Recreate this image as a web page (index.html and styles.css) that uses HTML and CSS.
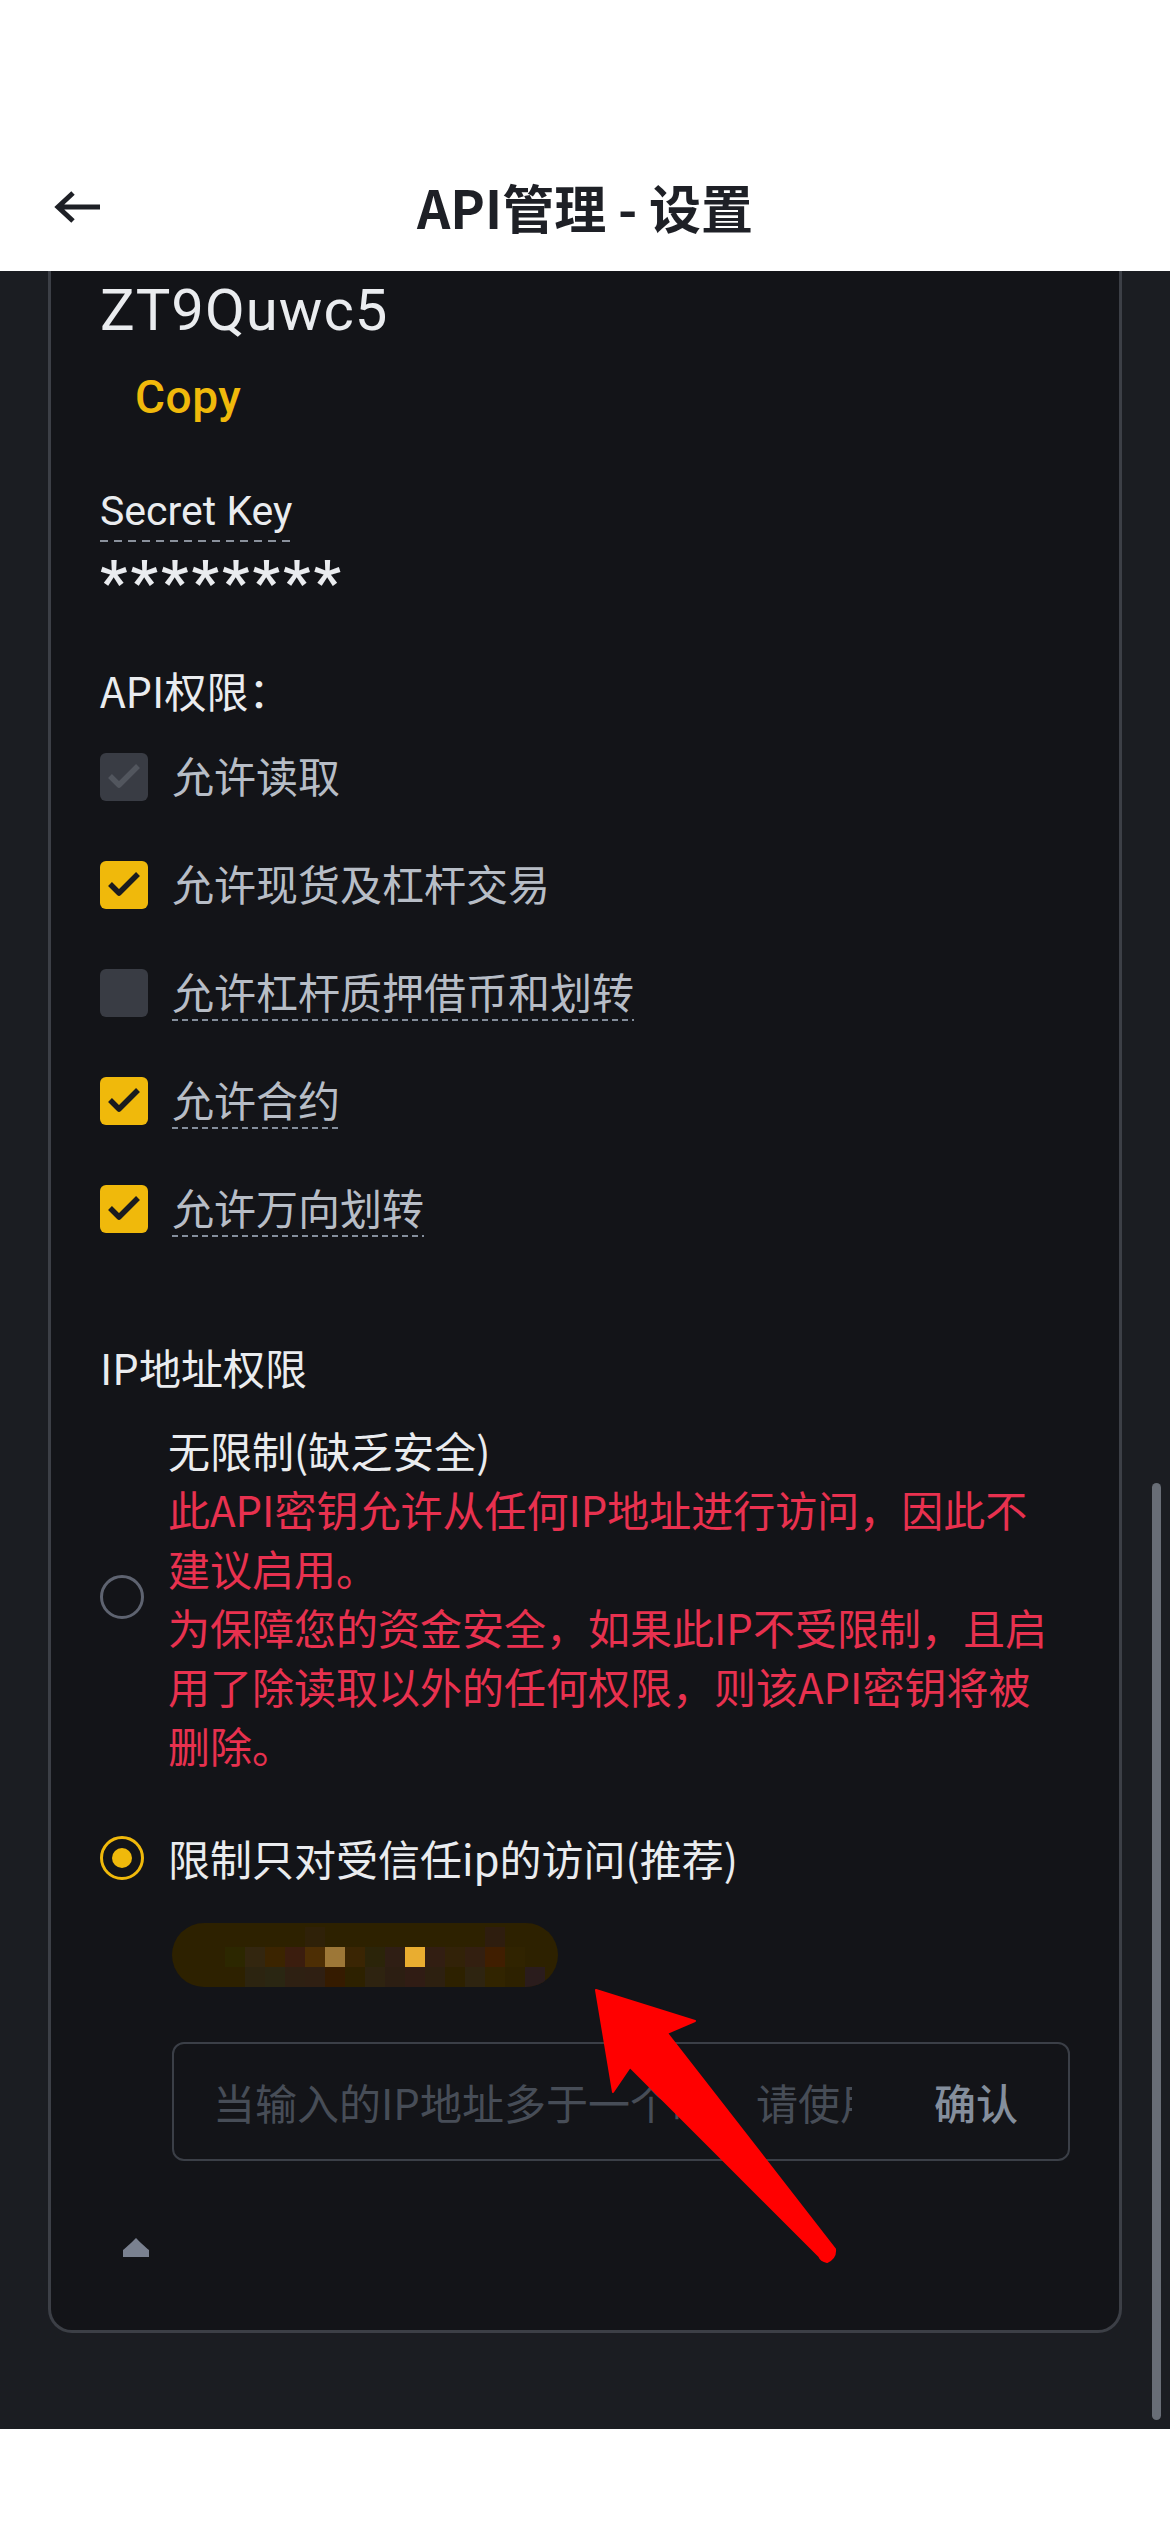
FILE: index.html
```html
<!DOCTYPE html>
<html lang="zh-CN">
<head>
<meta charset="utf-8">
<title>API管理 - 设置</title>
<link rel="stylesheet" href="styles.css">
</head>
<body>
<header class="topbar">
  <div class="navbar">
    <button class="back" aria-label="返回">
      <svg viewBox="0 0 50 38" width="50" height="38"><path d="M19 5 L4 19 L19 33 M4 19 H46" fill="none" stroke="#1e2026" stroke-width="5"/></svg>
    </button>
    <h1 class="title">API管理 - 设置</h1>
  </div>
</header>

<main class="screen">
  <section class="card">
    <div class="apikey">ZT9Quwc5</div>
    <div class="copy">Copy</div>
    <div class="field-label"><span class="dotted">Secret Key</span></div>
    <div class="secret">********</div>

    <div class="section-title">API权限：</div>
    <ul class="perms">
      <li class="perm">
        <span class="cb disabled"><svg viewBox="0 0 48 48" width="48" height="48"><path d="M10 23 L19 32 L38 13" fill="none" stroke-width="5.5" stroke-linejoin="round"/></svg></span>
        <span class="perm-label">允许读取</span>
      </li>
      <li class="perm">
        <span class="cb checked"><svg viewBox="0 0 48 48" width="48" height="48"><path d="M10 23 L19 32 L38 13" fill="none" stroke-width="5.5" stroke-linejoin="round"/></svg></span>
        <span class="perm-label">允许现货及杠杆交易</span>
      </li>
      <li class="perm">
        <span class="cb"></span>
        <span class="perm-label tip">允许杠杆质押借币和划转</span>
      </li>
      <li class="perm">
        <span class="cb checked"><svg viewBox="0 0 48 48" width="48" height="48"><path d="M10 23 L19 32 L38 13" fill="none" stroke-width="5.5" stroke-linejoin="round"/></svg></span>
        <span class="perm-label tip">允许合约</span>
      </li>
      <li class="perm">
        <span class="cb checked"><svg viewBox="0 0 48 48" width="48" height="48"><path d="M10 23 L19 32 L38 13" fill="none" stroke-width="5.5" stroke-linejoin="round"/></svg></span>
        <span class="perm-label tip">允许万向划转</span>
      </li>
    </ul>

    <div class="section-title ip-title">IP地址权限</div>

    <div class="radio-row unrestricted">
      <span class="radio"></span>
      <div class="radio-text">
        <div class="opt">无限制(缺乏安全)</div>
        <div class="warn">此API密钥允许从任何IP地址进行访问，因此不<br>建议启用。</div>
        <div class="warn">为保障您的资金安全，如果此IP不受限制，且启<br>用了除读取以外的任何权限，则该API密钥将被<br>删除。</div>
      </div>
    </div>

    <div class="radio-row restricted">
      <span class="radio checked"></span>
      <div class="opt">限制只对受信任ip的访问(推荐)</div>
    </div>

    <div class="ip-tag" aria-label="IP">
      <i class="px"></i><i class="px"></i><i class="px"></i><i class="px"></i><i class="px"></i><i class="px"></i><i class="px r1a"></i><i class="px"></i><i class="px"></i><i class="px"></i><i class="px"></i><i class="px"></i><i class="px"></i><i class="px"></i><i class="px"></i><i class="px r1b"></i><i class="px"></i><i class="px"></i>
      <i class="px"></i><i class="px"></i><i class="px m3"></i><i class="px m4"></i><i class="px m5"></i><i class="px m6"></i><i class="px m7"></i><i class="px m8"></i><i class="px m9"></i><i class="px m10"></i><i class="px m11"></i><i class="px m12"></i><i class="px m13"></i><i class="px m14"></i><i class="px m15"></i><i class="px m16"></i><i class="px m17"></i><i class="px"></i>
      <i class="px"></i><i class="px"></i><i class="px"></i><i class="px b4"></i><i class="px b5"></i><i class="px b6"></i><i class="px b7"></i><i class="px b8"></i><i class="px"></i><i class="px b10"></i><i class="px b11"></i><i class="px b12"></i><i class="px b13"></i><i class="px"></i><i class="px b15"></i><i class="px b16"></i><i class="px"></i><i class="px b18"></i>
    </div>

    <div class="ip-input">
      <input type="text" placeholder="当输入的IP地址多于一个时，请使用逗号分隔">
      <button class="confirm">确认</button>
    </div>

    <button class="collapse" aria-label="收起">
      <svg viewBox="0 0 26 19" width="26" height="19"><path d="M13 0 C11 2 3 10 0 12 L0 19 L26 19 L26 12 C23 10 15 2 13 0 Z" fill="#7a8190"/></svg>
    </button>
  </section>
  <div class="scrollbar"></div>
</main>

<footer class="homebar"></footer>

<svg class="annotation" viewBox="0 0 1170 2532" width="1170" height="2532">
  <path d="M596 1990 L695 2021 L667 2033 L835 2249 Q836 2258 827 2262 Q821 2261 819 2256 L630 2067 L613 2092 Z" fill="#ff0000" stroke="#ff0000" stroke-width="2" stroke-linejoin="round"/>
</svg>
</body>
</html>
```

FILE: styles.css
```css
* { box-sizing: border-box; }

html, body {
  margin: 0;
  padding: 0;
}

body {
  width: 1170px;
  background: #ffffff;
  font-family: Roboto, "Noto Sans CJK SC", sans-serif;
  position: relative;
}

/* ---------- header ---------- */
.topbar {
  height: 271px;
  padding-top: 142px;
  background: #ffffff;
}

.navbar {
  height: 129px;
  display: grid;
  grid-template-columns: 1fr auto 1fr;
  align-items: center;
}

.back {
  justify-self: start;
  margin-left: 54px;
  width: 50px;
  height: 38px;
  padding: 0;
  border: 0;
  background: none;
  display: flex;
}

.title {
  margin: 0;
  font: 700 52px/1 "Noto Sans CJK SC", sans-serif;
  color: #1e2026;
  white-space: nowrap;
}

/* ---------- dark screen ---------- */
.screen {
  position: relative;
  height: 2158px;
  background: #1b1d22;
  overflow: hidden;
}

.card {
  margin: 0 48px;
  border: 3px solid #3c3f46;
  border-top: 0;
  border-radius: 0 0 24px 24px;
  background: #131418;
  padding: 4px 49px 73px;
}

.apikey {
  font: 400 58px/70px Roboto, sans-serif;
  letter-spacing: 1px;
  color: #eaecef;
}

.copy {
  margin: 22px 0 0 35px;
  font: 500 46px/60px Roboto, sans-serif;
  letter-spacing: 0.5px;
  color: #f0b90b;
}

.field-label {
  margin-top: 59px;
  display: flex;
}

.dotted {
  font: 400 41px/50px Roboto, sans-serif;
  color: #eaecef;
  padding-bottom: 6px;
  background: repeating-linear-gradient(90deg, #8a919c 0 8px, transparent 8px 14px) left bottom / 100% 2px no-repeat;
}

.secret {
  margin-top: 16px;
  font: 500 62px/50px Roboto, sans-serif;
  letter-spacing: 3px;
  color: #eaecef;
}

.section-title {
  margin-top: 54px;
  font: 400 42px/56px "Noto Sans CJK SC", sans-serif;
  color: #eaecef;
}

/* ---------- permissions ---------- */
.perms {
  list-style: none;
  margin: 31px 0 0;
  padding: 0;
  display: flex;
  flex-direction: column;
  gap: 52px;
}

.perm {
  height: 56px;
  display: flex;
  align-items: center;
  gap: 24px;
}

.cb {
  flex: none;
  width: 48px;
  height: 48px;
  border-radius: 6px;
  background: #393c44;
  display: flex;
}

.cb svg { stroke: #1a1b1f; }
.cb.checked { background: #f0b90b; }
.cb.disabled svg { stroke: #52565e; }

.perm-label {
  font: 400 42px/52px "Noto Sans CJK SC", sans-serif;
  color: #b7bdc6;
  padding-bottom: 4px;
}

.perm-label.tip {
  background: repeating-linear-gradient(90deg, #848e9c 0 6px, transparent 6px 10px) left bottom / 100% 2px no-repeat;
}

/* ---------- IP restriction ---------- */
.ip-title { margin-top: 102px; }

.radio-row {
  display: flex;
  align-items: center;
  gap: 24px;
}

.radio {
  flex: none;
  width: 44px;
  height: 44px;
  border: 3px solid #5e6370;
  border-radius: 50%;
  display: flex;
  align-items: center;
  justify-content: center;
}

.radio.checked { border-color: #f0b90b; }
.radio.checked::after {
  content: "";
  width: 20px;
  height: 20px;
  border-radius: 50%;
  background: #f0b90b;
}

.unrestricted { margin-top: 25px; }

.radio-text {
  font: 400 42px/59px "Noto Sans CJK SC", sans-serif;
}

.opt { color: #eaecef; }

.warn {
  color: #e8314f;
  white-space: nowrap;
}

.restricted {
  margin-top: 56px;
  height: 56px;
  font: 400 42px/56px "Noto Sans CJK SC", sans-serif;
}

/* pixelated IP tag */
.ip-tag {
  margin: 37px 0 0 72px;
  width: 386px;
  height: 64px;
  border-radius: 32px;
  background: #2d2100;
  padding: 4px 0 0 13px;
  display: grid;
  grid-template-columns: repeat(18, 20px);
  grid-auto-rows: 20px;
  overflow: hidden;
}

.px { display: block; }
.r1a { background: #2f2108; }
.r1b { background: #2e1d0e; }
.m3 { background: #2c2700; }
.m4 { background: #33260f; }
.m5 { background: #3b2400; }
.m6 { background: #3b1d0e; }
.m7 { background: #4d2e04; }
.m8 { background: #9d7737; }
.m9 { background: #3a2503; }
.m10 { background: #2b2409; }
.m11 { background: #2f1e14; }
.m12 { background: #e9ad30; }
.m13 { background: #321e12; }
.m14 { background: #322208; }
.m15 { background: #331f10; }
.m16 { background: #401e00; }
.m17 { background: #302300; }
.b4 { background: #2c2410; }
.b5 { background: #2a2612; }
.b6 { background: #2e2012; }
.b7 { background: #2f1f12; }
.b8 { background: #351b00; }
.b10 { background: #2e2310; }
.b11 { background: #2c1e12; }
.b12 { background: #301c14; }
.b13 { background: #2d2010; }
.b15 { background: #2e2410; }
.b16 { background: #312400; }
.b18 { background: #2a1c1c; }

/* input */
.ip-input {
  margin: 55px 0 0 72px;
  height: 119px;
  border: 2px solid #3b3f47;
  border-radius: 12px;
  display: flex;
  align-items: center;
  padding: 0 50px 0 39px;
}

.ip-input input {
  flex: 1;
  min-width: 0;
  border: 0;
  padding: 0;
  background: transparent;
  outline: none;
  font: 400 42px/56px "Noto Sans CJK SC", sans-serif;
  color: #eaecef;
}

.ip-input input::placeholder { color: #474d57; }

.confirm {
  flex: none;
  margin-left: 82px;
  border: 0;
  padding: 0;
  background: none;
  font: 500 42px/56px "Noto Sans CJK SC", sans-serif;
  color: #848e9c;
}

.collapse {
  margin: 77px 0 0 23px;
  display: block;
  width: 26px;
  height: 19px;
  border: 0;
  padding: 0;
  background: none;
}
.collapse svg { display: block; }

.scrollbar {
  position: absolute;
  left: 1152px;
  top: 1212px;
  width: 9px;
  height: 937px;
  border-radius: 5px;
  background: #686d76;
}

.homebar {
  height: 103px;
  background: #ffffff;
}

.annotation {
  position: absolute;
  left: 0;
  top: 0;
  pointer-events: none;
}
```
